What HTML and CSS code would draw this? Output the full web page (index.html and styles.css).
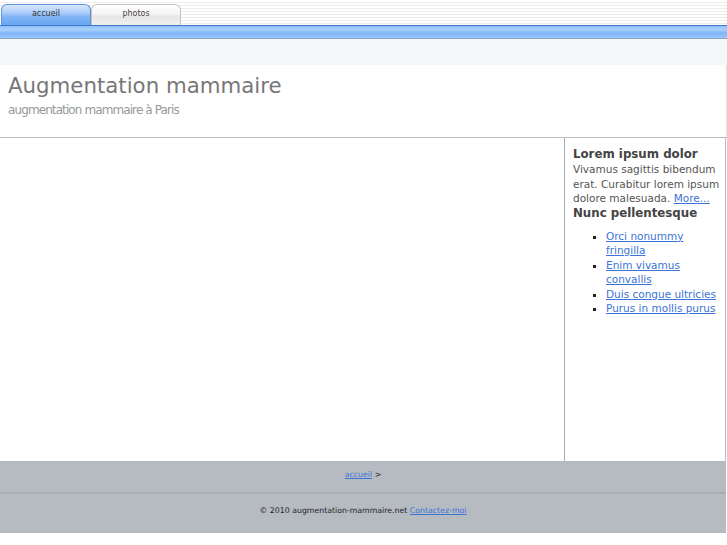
FILE: index.html
```html
<!DOCTYPE html>
<html lang="fr">
<head>
<meta charset="utf-8">
<title>Augmentation mammaire</title>
<link rel="stylesheet" href="styles.css">
</head>
<body>
<div class="page">
  <nav class="topnav">
    <a class="tab tab-active" href="#">accueil</a>
    <a class="tab" href="#">photos</a>
  </nav>
  <div class="bluebar"></div>
  <div class="band"></div>
  <header class="header">
    <h1 class="title">Augmentation mammaire</h1>
    <p class="subtitle">augmentation mammaire à Paris</p>
  </header>
  <div class="main">
    <div class="content"></div>
    <aside class="sidebar">
      <h3 class="side-title">Lorem ipsum dolor</h3>
      <p class="side-text">Vivamus sagittis bibendum erat. Curabitur lorem ipsum dolore malesuada. <a href="#">More...</a></p>
      <h3 class="side-title">Nunc pellentesque</h3>
      <ul class="side-list">
        <li><a href="#">Orci nonummy fringilla</a></li>
        <li><a href="#">Enim vivamus convallis</a></li>
        <li><a href="#">Duis congue ultricies</a></li>
        <li><a href="#">Purus in mollis purus</a></li>
      </ul>
    </aside>
  </div>
  <footer class="footer">
    <div class="crumbs"><a href="#">accueil</a> &gt;</div>
    <div class="copy">© 2010 augmentation-mammaire.net <a href="#">Contactez-moi</a></div>
  </footer>
</div>
</body>
</html>
```

FILE: styles.css
```css
html, body {
  margin: 0;
  padding: 0;
  background: #fff;
}
body {
  font-family: "DejaVu Sans", Verdana, sans-serif;
  color: #555;
}
.page {
  width: 727px;
}
.topnav {
  height: 25px;
  display: flex;
  align-items: flex-end;
  padding-left: 1px;
  background: repeating-linear-gradient(to bottom, #ffffff 0 2px, #ededed 2px 3px);
}
.tab {
  box-sizing: border-box;
  width: 90px;
  height: 21px;
  border: 1px solid #c4c4c4;
  border-bottom: none;
  border-radius: 6px 6px 0 0;
  background: linear-gradient(to bottom, #ffffff 0%, #f4f4f4 45%, #e6e6e6 60%, #f0f0f0 100%);
  font-size: 8px;
  color: #444;
  text-decoration: none;
  text-align: center;
  line-height: 18px;
}
.tab-active {
  border-color: #5e93dc;
  background: linear-gradient(to bottom, #d8e8fd 0%, #a9cbf8 40%, #7fb3f5 60%, #6aa6f2 100%);
  color: #333;
}
.bluebar {
  height: 12px;
  border-top: 1px solid #3f78c8;
  border-bottom: 1px solid #8aa3c2;
  background: linear-gradient(to bottom, #8fc0fb 0%, #a9d0fd 30%, #7fb6f7 60%, #9cc7fb 100%);
}
.band {
  height: 26px;
  background: #f5f6f8;
}
.header {
  height: 72px;
  border-bottom: 1px solid #bcbcc0;
  border-right: 1px solid #e4e4e4;
  box-sizing: content-box;
  padding: 0 8px;
  overflow: hidden;
}
.title {
  margin: 8px 0 0;
  font-size: 21.3px;
  font-weight: normal;
  color: #777;
  line-height: 26px;
}
.subtitle {
  margin: 4px 0 0;
  font-size: 12px;
  letter-spacing: -0.9px;
  color: #999;
  line-height: 14px;
}
.main {
  display: flex;
  height: 323px;
  width: 726px;
  border-right: 1px solid #b8bcc3;
  box-sizing: border-box;
}
.content {
  width: 564px;
  border-right: 1px solid #a9acb3;
}
.sidebar {
  flex: 1;
  padding: 9px 0 0 8px;
}
.side-title {
  margin: 0;
  font-size: 11.8px;
  font-weight: bold;
  color: #444;
  line-height: 15px;
}
.side-text {
  margin: 0;
  font-size: 10.5px;
  line-height: 14.5px;
  color: #555;
}
a {
  color: #3b73d6;
}
.side-list {
  margin: 8px 0 0;
  padding-left: 33px;
  list-style: square;
  font-size: 10.5px;
  line-height: 14.5px;
  color: #222;
}
.footer {
  width: 726px;
  background: #b6bbc2;
  font-size: 7.8px;
  color: #222;
}
.crumbs {
  line-height: 27px;
  text-align: center;
  border-bottom: 2px solid #a9aeb3;
  box-sizing: border-box;
  height: 33px;
}
.copy {
  height: 39px;
  line-height: 34px;
  text-align: center;
}
```
